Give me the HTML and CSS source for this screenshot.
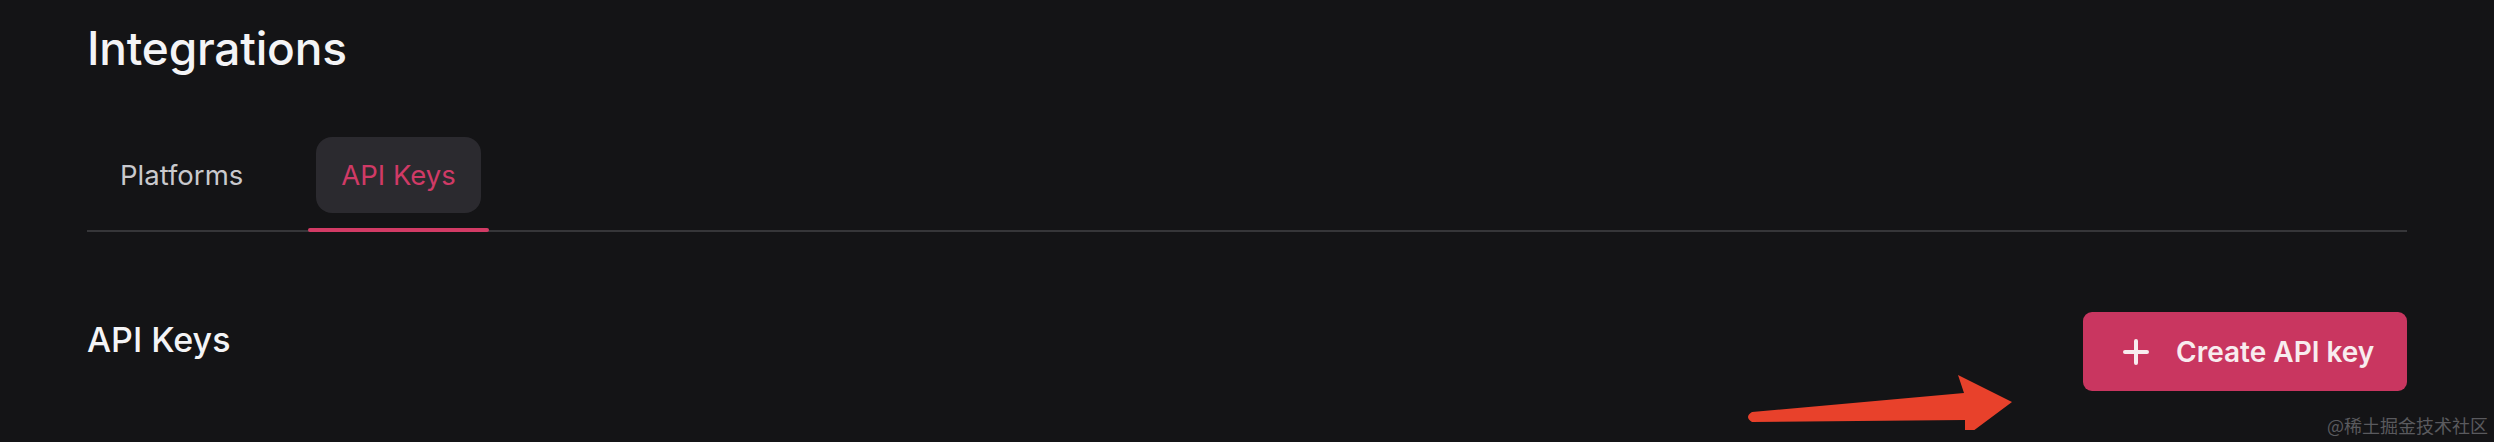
FILE: index.html
```html
<!DOCTYPE html>
<html lang="en">
<head>
<meta charset="utf-8">
<title>Integrations</title>
<link rel="stylesheet" href="styles.css">
</head>
<body>
<main class="page">
  <h1 class="title">Integrations</h1>
  <nav class="tabs">
    <div class="tab-wrap">
      <div class="tab">Platforms</div>
      <div class="tab-line"></div>
    </div>
    <div class="tab-wrap active">
      <div class="tab">API Keys</div>
      <div class="tab-line"></div>
    </div>
  </nav>
  <section class="section-head">
    <h2 class="section-title">API Keys</h2>
    <button class="btn-create">
      <svg class="plus" viewBox="0 0 28 28" width="28" height="28" aria-hidden="true">
        <path d="M14 3v22M3 14h22" stroke="currentColor" stroke-width="4" stroke-linecap="round" fill="none"/>
      </svg>
      <span>Create API key</span>
    </button>
  </section>
</main>
<svg class="arrow" viewBox="0 0 280 70" width="280" height="70" aria-hidden="true">
  <path d="M12 62 Q4 57 12 52 L224 33 L218 15 L272 42 L225 77 L225 60 Z" fill="#e8412b"/>
</svg>
<div class="watermark">@稀土掘金技术社区</div>
</body>
</html>
```
FILE: styles.css
```css
html, body {
  margin: 0;
  padding: 0;
  background: #141416;
  width: 2494px;
  height: 442px;
  overflow: hidden;
}
body {
  position: relative;
  font-family: Inter, "Noto Sans", sans-serif;
  color: #f2f2f4;
}
.page {
  width: 2320px;
  padding: 0 0 0 87px;
}
.title {
  margin: 0;
  padding-top: 20px;
  font-size: 46px;
  line-height: 56px;
  font-weight: 500;
  letter-spacing: -0.2px;
  color: #f4f4f6;
}
.tabs {
  display: flex;
  gap: 32px;
  margin-top: 61px;
  border-bottom: 2px solid #363639;
  height: 93px;
}
.tab-wrap {
  display: flex;
  flex-direction: column;
  padding: 0 8px;
  position: relative;
}
.tab {
  height: 76px;
  padding: 0 25px;
  border-radius: 16px;
  display: flex;
  align-items: center;
  font-size: 27.5px;
  font-weight: 400;
  color: #c9c9cd;
}
.tab-line {
  position: absolute;
  left: 0;
  right: 0;
  bottom: -2px;
  height: 4px;
  border-radius: 2px;
}
.tab-wrap.active .tab {
  background: #2b2a2f;
  color: #d03a66;
}
.tab-wrap.active .tab-line {
  background: #d23b65;
}
.section-head {
  display: flex;
  justify-content: space-between;
  align-items: flex-start;
  margin-top: 80px;
}
.section-title {
  margin: 0;
  padding-top: 8px;
  font-size: 34px;
  line-height: 40px;
  font-weight: 500;
  color: #f4f4f6;
}
.btn-create {
  display: flex;
  align-items: center;
  gap: 26px;
  height: 79px;
  width: 324px;
  padding: 0 0 0 39px;
  box-sizing: border-box;
  border: none;
  border-radius: 9px;
  background: #c93660;
  color: #f8ecef;
  font-family: Inter, "Noto Sans", sans-serif;
  font-size: 28px;
  font-weight: 600;
}
.plus {
  display: block;
  flex: none;
}
.arrow {
  position: absolute;
  left: 1740px;
  top: 360px;
}
.watermark {
  position: absolute;
  left: 2327px;
  top: 413px;
  font-family: "Noto Sans CJK SC", sans-serif;
  font-size: 18px;
  line-height: 24px;
  color: #5a5a5e;
}
```
